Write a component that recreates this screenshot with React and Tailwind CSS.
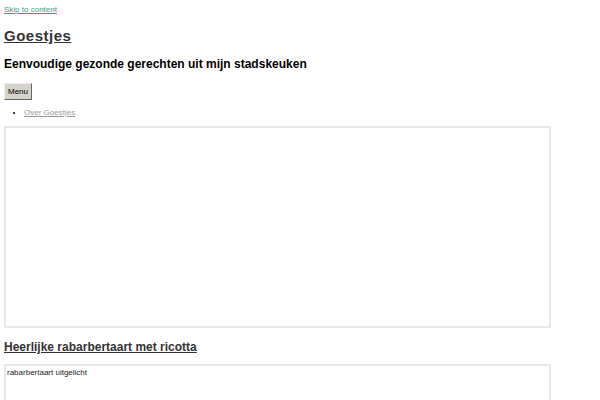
export default function App() {
  return (
    <div className="min-h-[400px] bg-white px-1 font-['Liberation_Sans',Arial,sans-serif] text-black">
      {/* Skip link */}
      <div className="pt-[4px] text-[8px] leading-[11px]">
        <a href="#content" className="text-[#3a9b80] underline">Skip to content</a>
      </div>

      {/* Site header */}
      <header className="mt-[11px]">
        <p className="text-[15px] font-bold leading-[20px] tracking-[0.5px]">
          <a href="#" className="text-[#333] underline">Goestjes</a>
        </p>
        <p className="mt-[10px] text-[12px] font-bold leading-[16px]">
          Eenvoudige gezonde gerechten uit mijn stadskeuken
        </p>
      </header>

      {/* Navigation */}
      <nav className="mt-[11px]">
        <button className="block h-[17px] border border-t-[#eee] border-l-[#eee] border-r-[#666] border-b-[#666] bg-[#d6d3cd] px-[3px] text-[8px] font-normal leading-none text-black">
          Menu
        </button>
        <ul className="mt-[8px] list-disc pl-[20px] text-[8px] leading-[10px] marker:text-black">
          <li>
            <a href="#" className="text-[#999] underline">Over Goestjes</a>
          </li>
        </ul>
      </nav>

      {/* Slider placeholder */}
      <div className="mt-[8px] h-[202px] w-[547px] border-2 border-[#e8e8e8]" />

      {/* Post */}
      <article id="content" className="mt-[11px]">
        <h2 className="text-[12px] font-bold leading-[16px]">
          <a href="#" className="text-[#333] underline">Heerlijke rabarbertaart met ricotta</a>
        </h2>
        <div className="mt-[9px] h-[60px] w-[547px] border-2 border-[#e8e8e8] pl-[1px] pt-[2px] text-[8px] leading-[10px] text-[#222]">
          rabarbertaart uitgelicht
        </div>
      </article>
    </div>
  );
}
